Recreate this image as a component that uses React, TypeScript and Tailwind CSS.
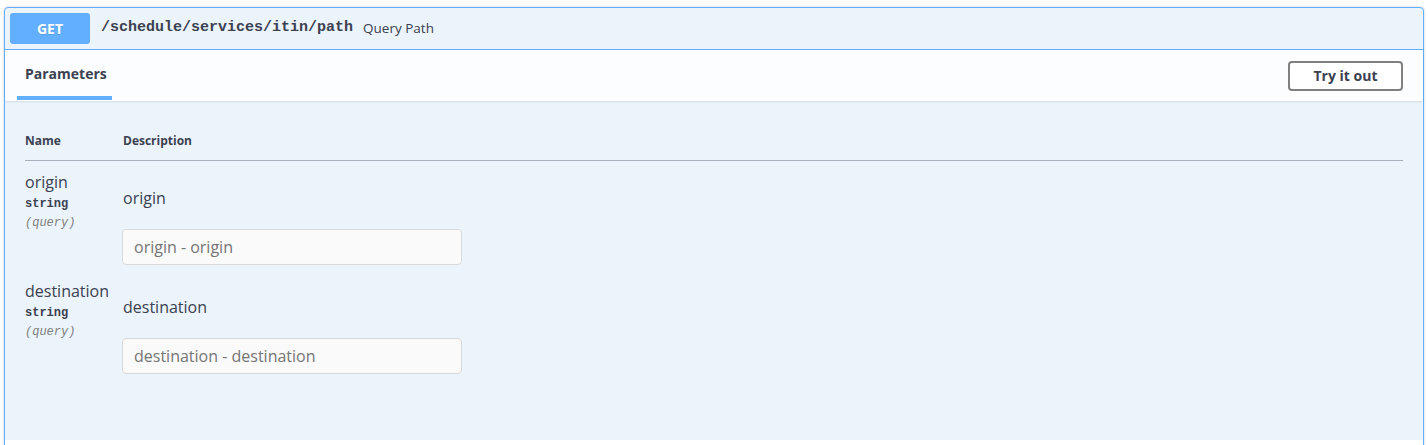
const params = [
  { name: 'origin', placeholder: 'origin - origin' },
  { name: 'destination', placeholder: 'destination - destination' },
];

export default function App() {
  return (
    <div className="min-h-[445px] bg-white px-[4px] pt-[7px] font-['Open_Sans',sans-serif] text-[#3b4151]">
      <div className="rounded-[4px] border border-[#61affe] bg-[#ebf3fb] shadow-[0_0_3px_rgba(0,0,0,0.19)]">

        {/* Summary */}
        <div className="flex h-[42px] items-center border-b border-[#61affe] px-[5px]">
          <span className="flex h-[31px] w-[80px] items-center justify-center rounded-[3px] bg-[#61affe] text-[14px] font-bold text-white [text-shadow:0_1px_0_rgba(0,0,0,0.1)]">
            GET
          </span>
          <span className="pl-[11px] pr-[10px] font-['Liberation_Mono',monospace] text-[15px] font-bold">
            /schedule/services/itin/path
          </span>
          <span className="text-[13.5px]">Query Path</span>
        </div>

        {/* Section header */}
        <div className="flex h-[51px] items-center justify-between bg-white/80 pl-[12px] pr-[20px] shadow-[0_1px_2px_rgba(0,0,0,0.1)]">
          <div className="flex h-full w-[95px] flex-col justify-end">
            <div className="flex flex-1 items-center whitespace-nowrap px-[8px] text-[14px] font-bold">Parameters</div>
            <div className="mb-[1px] h-[4px] w-full bg-[#61affe]" />
          </div>
          <button className="h-[30px] w-[115px] rounded-[4px] border-2 border-[#808080] bg-white text-[14px] font-bold">
            Try it out
          </button>
        </div>

        {/* Parameters table */}
        <div className="px-[20px] pb-[61px]">
          <div className="grid grid-cols-[98px_1fr] border-b border-[#a9b0bc] pt-[32px] pb-[11px] text-[12px] font-bold leading-4">
            <span>Name</span>
            <span>Description</span>
          </div>

          {params.map((p) => (
            <div key={p.name} className="grid grid-cols-[98px_1fr]">
              <div className="pt-[10px]">
                <div className="text-[16px] leading-[22px]">{p.name}</div>
                <div className="mt-[3px] font-['Liberation_Mono',monospace] text-[12px] font-bold leading-4">string</div>
                <div className="mt-[3px] font-['Liberation_Mono',monospace] text-[12px] italic leading-4 text-[#808080]">(query)</div>
              </div>
              <div className="pt-[26px] pb-[5px]">
                <div className="text-[16px] leading-[22px]">{p.name}</div>
                <input
                  placeholder={p.placeholder}
                  className="-ml-[1px] mt-[20px] h-[36px] w-[340px] rounded-[4px] border border-[#d9d9d9] bg-[#fafafa] px-[11px] text-[16px] placeholder:text-[#757575]"
                />
              </div>
            </div>
          ))}
        </div>

        <div className="h-[20px] bg-white" />
      </div>
    </div>
  );
}
